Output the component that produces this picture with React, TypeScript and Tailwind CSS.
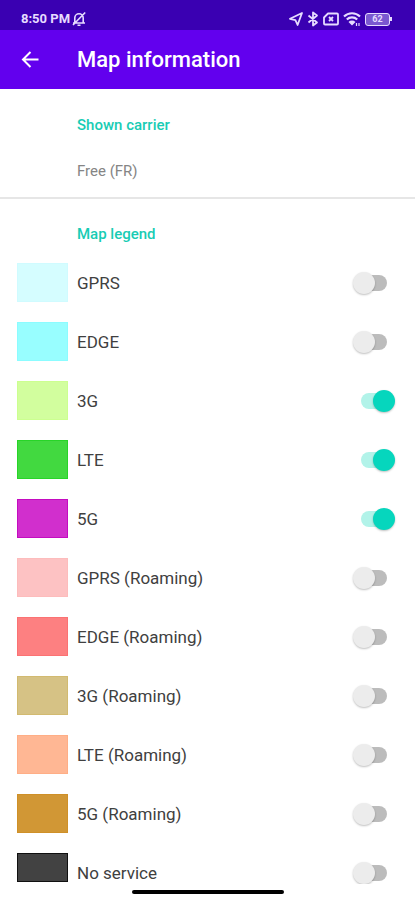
import { useState } from "react";

const layers = [
  { id: "gprs", name: "GPRS", color: "bg-[#d5fdff] border-[#d0fbff]", on: false },
  { id: "edge", name: "EDGE", color: "bg-[#98feff] border-[#8cfcff]", on: false },
  { id: "3g", name: "3G", color: "bg-[#d2fe9e] border-[#ccff90]", on: true },
  { id: "lte", name: "LTE", color: "bg-[#42d940] border-[#28d428]", on: true },
  { id: "5g", name: "5G", color: "bg-[#d12fcd] border-[#c40cc0]", on: true },
  { id: "gprs-roaming", name: "GPRS (Roaming)", color: "bg-[#fdc2c3] border-[#fdbcbc]", on: false },
  { id: "edge-roaming", name: "EDGE (Roaming)", color: "bg-[#fd8081] border-[#fb7273]", on: false },
  { id: "3g-roaming", name: "3G (Roaming)", color: "bg-[#d6c285] border-[#d2ba70]", on: false },
  { id: "lte-roaming", name: "LTE (Roaming)", color: "bg-[#ffb794] border-[#ffae86]", on: false },
  { id: "5g-roaming", name: "5G (Roaming)", color: "bg-[#d19735] border-[#cf9028]", on: false },
  { id: "none", name: "No service", color: "bg-[#424242] border-[#101010]", on: false },
];

function StatusBar() {
  return (
    <div className="flex h-[30px] shrink-0 items-center justify-between bg-[#3a00b2] pt-2 pr-[23px] pl-[21px] text-[#e6dcff]">
      <div className="flex items-center gap-0.5">
        <span className="text-[13px] font-bold">8:50 PM</span>
        <svg className="h-4 w-3.5" viewBox="0 0 14 16" fill="none" stroke="currentColor" strokeWidth="1.6">
          <path d="M2.8 11.500V7a4.200 4.200 0 0 1 8.400 0v4.500M1 12h12M5.500 14.200h3M13.200 1.500 1 14" />
        </svg>
      </div>
      <div className="flex items-center gap-1">
        <svg className="h-4 w-3.5" viewBox="0 0 14 16" fill="none" stroke="currentColor" strokeWidth="1.8" strokeLinejoin="round">
          <path d="M13 2 1 7.800l5.400 1.400L8.600 14z" />
        </svg>
        <svg className="h-4 w-3" viewBox="0 0 12 16" fill="none" stroke="currentColor" strokeWidth="1.8" strokeLinejoin="round">
          <path d="m1.500 4.500 8.500 7L6 14.500v-13l4 3-8.500 7" />
        </svg>
        <svg className="h-4 w-4" viewBox="0 0 16 16" fill="none" stroke="currentColor" strokeWidth="1.8" strokeLinejoin="round">
          <path d="M5 2.500h9a1 1 0 0 1 1 1v9a1 1 0 0 1-1 1H2a1 1 0 0 1-1-1V6.500z" />
          <path d="m6 6 4 4M10 6l-4 4" />
        </svg>
        <svg className="h-4 w-[18px]" viewBox="0 0 18 16" fill="none" stroke="currentColor" strokeWidth="2.2">
          <path d="M1 5.500a11.500 11.500 0 0 1 16 0M3.800 8.500a7.500 7.500 0 0 1 10.400 0" />
          <path d="M5.500 11a5 5 0 0 1 7 0L9 14.500z" fill="currentColor" stroke="none" />
          <path d="M13.500 12v3M16 12v3" strokeWidth="1.2" />
        </svg>
        <div className="flex items-center">
          <div className="flex h-[13px] w-[25px] items-center justify-center rounded-[3px] border border-current bg-[#7a58d0] text-[9px] leading-none font-bold">
            62
          </div>
          <div className="h-1 w-0.5 bg-current" />
        </div>
      </div>
    </div>
  );
}

export default function App() {
  const [enabled, setEnabled] = useState(layers.filter((l) => l.on).map((l) => l.id));

  const toggle = (id: string) => {
    setEnabled((prev) => (prev.includes(id) ? prev.filter((x) => x !== id) : [...prev, id]));
  };

  return (
    <div className="flex h-screen flex-col overflow-hidden bg-white font-['Roboto',sans-serif]">
      <StatusBar />

      {/* Toolbar */}
      <header className="flex h-[59px] shrink-0 items-center bg-[#6200ee] text-white">
        <button aria-label="Back" className="ml-4 flex h-7 w-7 items-center justify-center">
          <svg className="h-5 w-5" viewBox="0 0 20 20" fill="none" stroke="currentColor" strokeWidth="2">
            <path d="M18.500 9.500H3.500M10.500 2 3 9.500l7.500 7.500" />
          </svg>
        </button>
        <h1 className="ml-[33px] text-[22px] font-medium">Map information</h1>
      </header>

      <main className="min-h-0 flex-1 overflow-hidden">
        {/* Carrier */}
        <section className="border-b-2 border-[#e6e6e6] pt-[26px] pb-4 pl-[77px]">
          <h2 className="text-[15px] leading-5 font-medium text-[#18ccb4]">Shown carrier</h2>
          <p className="mt-[26px] text-[15px] leading-5 text-[#858585]">Free (FR)</p>
        </section>

        {/* Legend */}
        <section className="pt-[25px]">
          <h2 className="pl-[77px] text-[15px] leading-5 font-medium text-[#18ccb4]">Map legend</h2>
          <ul className="mt-[9px]">
            {layers.map((layer) => (
              <li key={layer.id} className="group flex h-[59px] items-center pr-5 pl-[17px]">
                <span
                  className={`h-[39px] w-[51px] border group-last:mb-2.5 group-last:h-[29px] ${layer.color}`}
                />
                <label htmlFor={layer.id} className="ml-[9px] flex-1 text-[17px] leading-6 text-[#404040]">
                  {layer.name}
                </label>
                <input
                  id={layer.id}
                  type="checkbox"
                  role="switch"
                  checked={enabled.includes(layer.id)}
                  onChange={() => toggle(layer.id)}
                  className="relative h-[22px] w-[42px] cursor-pointer appearance-none before:absolute before:inset-x-2 before:inset-y-[3px] before:rounded-full before:bg-[#bcbcbc] after:absolute after:top-0 after:left-0 after:size-[22px] after:rounded-full after:bg-[#ececec] after:shadow-[0_1px_2px_rgba(0,0,0,0.25)] checked:before:bg-[#b2f3e9] checked:after:left-5 checked:after:bg-[#06d6bd]"
                />
              </li>
            ))}
          </ul>
        </section>
      </main>

      {/* Gesture bar */}
      <footer className="flex h-4 shrink-0 items-center justify-center bg-white">
        <div className="h-1 w-[152px] rounded-full bg-black" />
      </footer>
    </div>
  );
}
